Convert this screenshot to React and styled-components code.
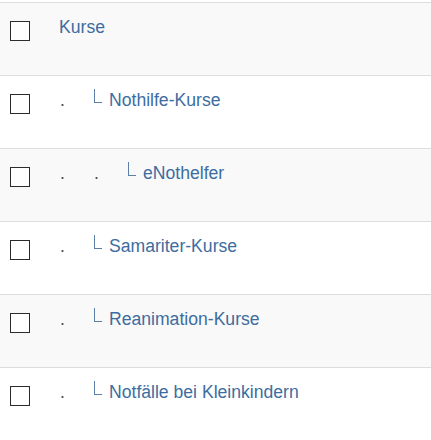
import React from 'react';
import styled, {createGlobalStyle} from 'styled-components';

const GlobalStyle = createGlobalStyle`
    body {
        margin: 0;
        background: #ffffff;
        font-family: "Liberation Sans", Arial, sans-serif;
    }
`;

const courses = [
    {id: 1, name: 'Kurse', level: 0},
    {id: 2, name: 'Nothilfe-Kurse', level: 1},
    {id: 3, name: 'eNothelfer', level: 2},
    {id: 4, name: 'Samariter-Kurse', level: 1},
    {id: 5, name: 'Reanimation-Kurse', level: 1},
    {id: 6, name: 'Notfälle bei Kleinkindern', level: 1},
];

const App = () => {
    return(
        <>
            <GlobalStyle/>
            <Table>
                <tbody>
                    {courses.map(course => (
                        <Row key={course.id}>
                            <CheckCell>
                                <Checkbox/>
                            </CheckCell>
                            <LabelCell>
                                {Array.from({length: course.level}).map((_, i) => (
                                    <Indent key={i}>.</Indent>
                                ))}
                                {course.level > 0 && <Elbow/>}
                                <Label>{course.name}</Label>
                            </LabelCell>
                        </Row>
                    ))}
                </tbody>
            </Table>
        </>
    );
};

const Table = styled.table`
    width: 100%;
    margin-top: 2px;
    border-collapse: collapse;
    border-top: 1px solid #dddddd;
`;

const Row = styled.tr`
    height: 73px;
    border-bottom: 1px solid #dddddd;

    &:nth-child(odd) {
        background: #f9f9f9;
    }
`;

const CheckCell = styled.td`
    width: 49px;
    padding: 18px 0 0 10px;
    vertical-align: top;
`;

const Checkbox = styled.span`
    display: block;
    width: 18px;
    height: 18px;
    border: 1px solid #2b2b2b;
    background: #ffffff;
`;

const LabelCell = styled.td`
    padding: 12px 0 0 0;
    vertical-align: top;
    font-size: 17.6px;
    line-height: 24px;
    color: #3d6d9f;
    white-space: nowrap;
`;

const Indent = styled.span`
    display: inline-block;
    width: 34px;
    padding-left: 1px;
    box-sizing: border-box;
    color: #4a4a4a;
`;

const Elbow = styled.span`
    display: inline-block;
    width: 7px;
    height: 13px;
    margin: 0 7px 3px 1px;
    border-left: 1px solid #5b7fa6;
    border-bottom: 1px solid #5b7fa6;
`;

const Label = styled.span`
    color: #3d6d9f;
`;

export default App;
